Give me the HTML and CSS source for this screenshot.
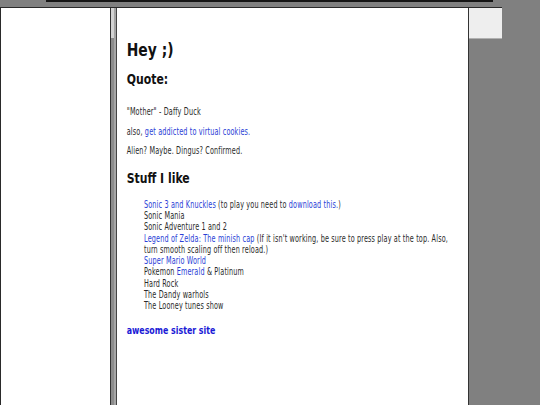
FILE: index.html
```html
<!DOCTYPE html>
<html>
<head>
<meta charset="utf-8">
<title>Hey ;)</title>
<link rel="stylesheet" href="styles.css">
</head>
<body>
<div class="topbar"><div class="blackbar"></div></div>
<div class="frame">
  <div class="left"></div>
  <div class="scroll"><div class="track"><div class="thumb"></div></div><div class="rail"></div></div>
  <div class="main">
    <div class="content">
      <h1>Hey ;)</h1>
      <h2>Quote:</h2>
      <p>"Mother" - Daffy Duck</p>
      <p>also, <a href="#">get addicted to virtual cookies.</a></p>
      <p>Alien? Maybe. Dingus? Confirmed.</p>
      <h2 class="stuff">Stuff I like</h2>
      <ul class="likes">
        <li><a href="#">Sonic 3 and Knuckles</a> (to play you need to <a href="#">download this.</a>)</li>
        <li>Sonic Mania</li>
        <li>Sonic Adventure 1 and 2</li>
        <li><a href="#">Legend of Zelda: The minish cap</a> <span>(If it isn't working, be sure to press play at the top. Also,</span><br><span>turn smooth scaling off then reload.)</span></li>
        <li><a href="#">Super Mario World</a></li>
        <li>Pokemon <a href="#">Emerald</a> &amp; Platinum</li>
        <li>Hard Rock</li>
        <li>The Dandy warhols</li>
        <li>The Looney tunes show</li>
      </ul>
      <a class="sister" href="#">awesome sister site</a>
    </div>
  </div>
  <div class="side"><div class="box"></div></div>
</div>
</body>
</html>
```
FILE: styles.css
```css
html, body {
  margin: 0;
  padding: 0;
  background: #808080;
  height: 405px;
  overflow: hidden;
}
.topbar {
  height: 7px;
}
.blackbar {
  margin-left: 46px;
  width: 447px;
  height: 2px;
  background: #151515;
}
.frame {
  display: flex;
  width: 501px;
  height: 397px;
  border-top: 1px solid #2a2a2a;
  border-left: 1px solid #2a2a2a;
}
.left {
  width: 109px;
  background: #fff;
}
.scroll {
  width: 7px;
  display: flex;
  border-left: 1px solid #333;
  border-right: 1px solid #444;
  box-sizing: border-box;
}
.track {
  width: 3px;
  background: #8c8c8c;
}
.thumb {
  height: 30px;
  background: #d4d4d4;
}
.rail {
  width: 2px;
  background: #a6a6a6;
}
.main {
  width: 351px;
  background: #fff;
  border-right: 1px solid #333;
  overflow: hidden;
}
.content {
  width: 468px;
  box-sizing: border-box;
  padding: 31px 4px 0 13px;
  transform: scaleX(0.75);
  transform-origin: 0 0;
  font-family: "DejaVu Sans Condensed", "DejaVu Sans", Verdana, sans-serif;
  font-stretch: semi-condensed;
  font-size: 9.6px;
  letter-spacing: 0.2px;
  line-height: 11.3px;
  color: #2a2a2a;
}
h1 {
  font-family: "DejaVu Sans", Verdana, sans-serif;
  font-stretch: normal;
  letter-spacing: 0;
  font-size: 18.5px;
  line-height: 22px;
  margin: 0 0 10px;
  color: #111;
}
h2 {
  font-family: "DejaVu Sans", Verdana, sans-serif;
  font-stretch: normal;
  letter-spacing: 0;
  font-size: 14.5px;
  line-height: 17px;
  margin: 0 0 18px;
  color: #111;
}
p {
  margin: 0 0 8.4px;
}
h2.stuff {
  margin-top: 13px;
  margin-bottom: 12px;
}
a {
  color: #2a3ed6;
  text-decoration: none;
}
.likes {
  list-style: none;
  margin: 0 0 12.5px;
  padding-left: 23px;
}
.likes li {
  line-height: 11.3px;
  white-space: nowrap;
}
.sister {
  display: block;
  font-family: "DejaVu Sans", Verdana, sans-serif;
  font-stretch: normal;
  letter-spacing: 0;
  font-weight: bold;
  font-size: 10.5px;
  line-height: 13px;
  color: #1a1ad6;
}
.side {
  width: 33px;
}
.box {
  height: 30px;
  background: #eeeeee;
  border-bottom: 1px solid #b0b0b0;
}
```
